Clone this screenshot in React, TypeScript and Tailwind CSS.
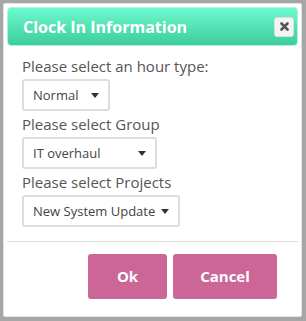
import React from "react";

const Caret = () => (
  <svg width="8" height="5" viewBox="0 0 8 5" className="ml-auto shrink-0">
    <path d="M0 0h8L4 5z" fill="#333" />
  </svg>
);

// Fake dropdown box
const SelectBox = ({ value, width }: { value: string; width: string }) => (
  <div
    className={`${width} h-[32px] flex items-center gap-[6px] pl-[9px] pr-[9px] border-2 border-[#ddd] rounded-[3px] bg-white text-[13px] text-[#444] whitespace-nowrap`}
  >
    <span>{value}</span>
    <Caret />
  </div>
);

const App = () => {
  return (
    <div
      className="w-[306px] h-[321px] bg-[#a6a6a6] pt-[3px] pl-[3px] pr-[4px] pb-[4px]"
      style={{ fontFamily: '"Open Sans", sans-serif' }}
    >
      {/* Dialog */}
      <div className="w-full h-full bg-white border border-[#e2e2e2] rounded-[2px] p-[3px] flex flex-col">
        {/* Header */}
        <div className="h-[39px] flex items-center justify-between pl-[15px] pr-[3px] rounded-[4px] border border-[#b5f3df] bg-gradient-to-b from-[#6cf9d0] to-[#3ccd99]">
          <span className="text-white font-bold text-[16px]">Clock In Information</span>
          <button className="w-[20px] h-[20px] rounded-[3px] bg-[#f4f4f4] border border-[#ddd] flex items-center justify-center">
            <svg width="9" height="9" viewBox="0 0 9 9">
              <path d="M1.5 1.5l6 6M7.5 1.5l-6 6" stroke="#555" strokeWidth="2.6" strokeLinecap="round" />
            </svg>
          </button>
        </div>

        {/* Body */}
        <div className="flex flex-col pl-[15px] pt-[10px] text-[#555] text-[15px] leading-[20px]">
          <label>Please select an hour type:</label>
          <div className="mt-[3px] mb-[3px]">
            <SelectBox value="Normal" width="w-[88px]" />
          </div>
          <label>Please select Group</label>
          <div className="mt-[3px] mb-[3px]">
            <SelectBox value="IT overhaul" width="w-[135px]" />
          </div>
          <label>Please select Projects</label>
          <div className="mt-[3px]">
            <SelectBox value="New System Update" width="w-[158px]" />
          </div>
        </div>

        {/* Divider */}
        <div className="mt-[14px] border-t border-[#ddd]" />

        {/* Footer */}
        <div className="flex justify-end gap-[6px] pr-[21px] pt-[12px]">
          <button className="w-[79px] h-[45px] rounded-[3px] bg-[#cc6696] text-white font-bold text-[15px]">
            Ok
          </button>
          <button className="w-[104px] h-[45px] rounded-[3px] bg-[#cc6696] text-white font-bold text-[15px]">
            Cancel
          </button>
        </div>
      </div>
    </div>
  );
};

export default App;
